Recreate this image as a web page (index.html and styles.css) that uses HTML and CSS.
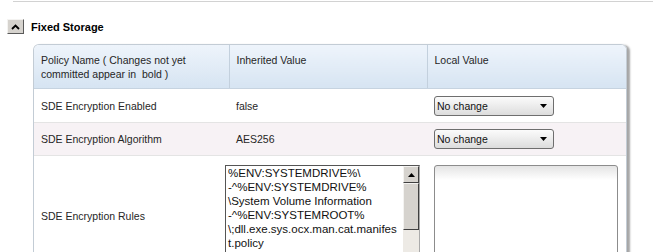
FILE: index.html
```html
<!DOCTYPE html>
<html lang="en">
<head>
<meta charset="UTF-8">
<title>Fixed Storage</title>
<link rel="stylesheet" href="styles.css">
</head>
<body>

<div class="rule"></div>

<div class="section-head">
  <button class="toggle" type="button">
    <svg width="9" height="6" viewBox="0 0 9 6"><path d="M1 5 L4.5 1.5 L8 5" fill="none" stroke="#000" stroke-width="1.8"/></svg>
  </button>
  <span class="section-title">Fixed Storage</span>
</div>

<div class="panel">
  <table class="policy">
    <thead>
      <tr>
        <th class="col-name">Policy Name ( Changes not yet committed appear in&nbsp; bold )</th>
        <th class="col-inh">Inherited Value</th>
        <th class="col-local">Local Value</th>
      </tr>
    </thead>
    <tbody>
      <tr>
        <td>SDE Encryption Enabled</td>
        <td>false</td>
        <td><div class="select">No change<svg class="arrow" width="7" height="4" viewBox="0 0 7 4"><path d="M0 0 H7 L3.5 4 Z" fill="#000"/></svg></div></td>
      </tr>
      <tr class="alt">
        <td>SDE Encryption Algorithm</td>
        <td>AES256</td>
        <td><div class="select">No change<svg class="arrow" width="7" height="4" viewBox="0 0 7 4"><path d="M0 0 H7 L3.5 4 Z" fill="#000"/></svg></div></td>
      </tr>
      <tr class="tall">
        <td>SDE Encryption Rules</td>
        <td class="top">
          <div class="listbox">
            <div class="list-lines">
              <div>%ENV:SYSTEMDRIVE%\</div>
              <div>-^%ENV:SYSTEMDRIVE%</div>
              <div>\System Volume Information</div>
              <div>-^%ENV:SYSTEMROOT%</div>
              <div>\;dll.exe.sys.ocx.man.cat.manifes</div>
              <div>t.policy</div>
            </div>
            <div class="scrollbar">
              <div class="sb-btn"><svg width="7" height="4" viewBox="0 0 7 4"><path d="M0 4 H7 L3.5 0 Z" fill="#000"/></svg></div>
              <div class="sb-thumb"></div>
            </div>
          </div>
        </td>
        <td class="top"><div class="textbox"></div></td>
      </tr>
    </tbody>
  </table>
</div>

</body>
</html>
```

FILE: styles.css
```css
html, body { margin: 0; padding: 0; }
body { font-family: "Liberation Sans", Arial, sans-serif; font-size: 10.5px; color: #262626; background: #fff; overflow: hidden; }
.rule { margin: 1px 0 0 13px; border-top: 1px solid #d2d2d2; }
.section-head { display: flex; align-items: center; gap: 7px; margin: 17px 0 0 7px; height: 15px; }
.toggle { width: 17px; height: 15px; padding: 0; margin: 0; display: flex; align-items: center; justify-content: center; background: #d6d3ce; border: 1px solid; border-color: #f4f3f1 #5a5a5a #5a5a5a #f4f3f1; }
.section-title { font-weight: bold; font-size: 11px; color: #000; }
.panel { margin: 10px 0 0 33px; width: 592px; border: 1px solid #c3ccd5; border-bottom: none; border-radius: 6px 6px 0 0; box-shadow: 3px 1px 2px rgba(0,0,0,0.35); overflow: hidden; height: 260px; }
.policy { border-collapse: collapse; width: 592px; table-layout: fixed; }
.policy th { font-weight: normal; text-align: left; vertical-align: top; padding: 8px 7px 6px; line-height: 14px; height: 29px; color: #262626; background: linear-gradient(#eef4fb, #d6e4f2); border-bottom: 1px solid #c6d3e0; border-right: 1px solid #c3d0dd; }
.policy th:last-child { border-right: none; }
.col-name { width: 195px; box-sizing: border-box; }
.col-inh { width: 198px; box-sizing: border-box; }
.policy td { padding: 0 7px; height: 33px; border-bottom: 1px solid #e4e4e4; vertical-align: middle; }
.policy tr.alt td { background: #f7f2f5; height: 32px; }
.policy tr.tall td { border-bottom: none; height: 96px; padding-top: 9px; padding-bottom: 10px; }
.policy tr.tall td.top { vertical-align: top; }
.select { position: relative; width: 116px; height: 18px; line-height: 18px; padding-left: 2px; border: 1px solid #6e6e6e; border-radius: 3px; background: linear-gradient(#fbfbfb, #e9e9e9 60%, #dcdcdc); color: #111; }
.select .arrow { position: absolute; right: 6px; top: 7px; }
.listbox { display: flex; width: 193px; height: 96px; margin-left: -11px; border: 1px solid #555; border-right-color: #aaa; border-bottom-color: #ddd; background: #fff; overflow: hidden; }
.list-lines { flex: 1; padding: 0 0 0 2px; font-size: 11.5px; line-height: 14px; white-space: nowrap; overflow: hidden; color: #111; }
.scrollbar { width: 16px; display: flex; flex-direction: column; background: #edeae5; }
.sb-btn, .sb-thumb { box-sizing: border-box; background: #d6d3ce; border: 1px solid; border-color: #f4f3f1 #404040 #404040 #f4f3f1; }
.sb-btn { height: 17px; display: flex; align-items: center; justify-content: center; }
.sb-thumb { height: 47px; }
.textbox { width: 182px; height: 100px; border: 1px solid #8c8c8c; border-radius: 3px 3px 0 0; background: linear-gradient(#e4e4e4, #fff 14px); }
```
